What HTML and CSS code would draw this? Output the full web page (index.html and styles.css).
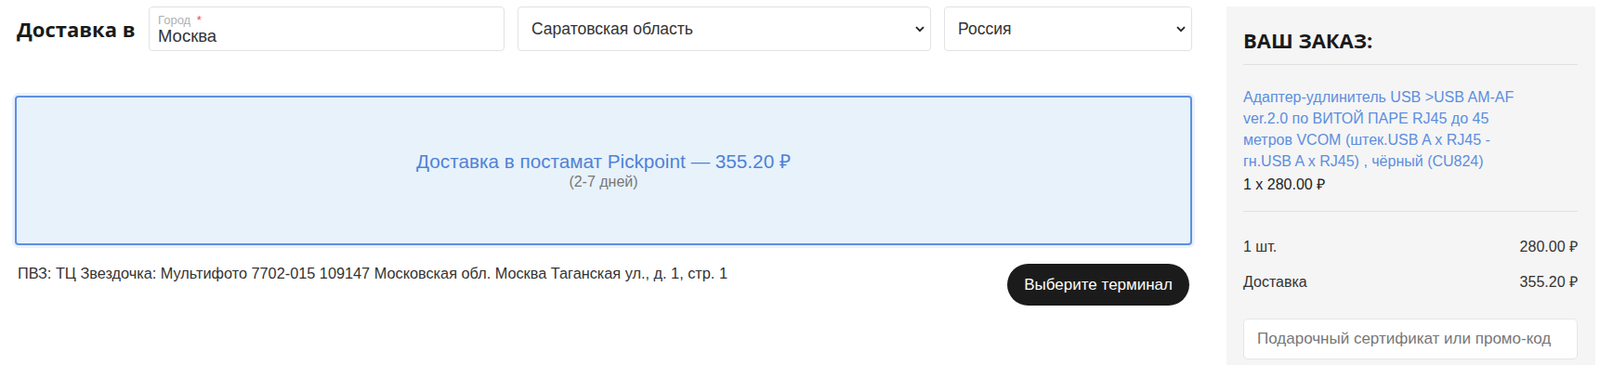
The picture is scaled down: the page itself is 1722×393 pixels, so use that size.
FILE: index.html
```html
<!DOCTYPE html>
<html lang="ru">
<head>
  <meta charset="UTF-8">
  <meta name="viewport" content="width=device-width, initial-scale=1">
  <title>Оформление заказа</title>
  <link rel="stylesheet" href="styles.css">
</head>
<body>
<div class="page">
  <div class="main">
    <div class="location">
      <h2>Доставка в</h2>
      <label class="field city">
        <span class="field-label">Город <i>*</i></span>
        <input type="text" value="Москва">
      </label>
      <div class="select-wrap region">
        <select>
          <option>Саратовская область</option>
        </select>
        <svg class="chevron" width="10" height="7" viewBox="0 0 10 7"><path d="M1 1.2 5 5.2 9 1.2" fill="none" stroke="#222" stroke-width="1.8"/></svg>
      </div>
      <div class="select-wrap country">
        <select>
          <option>Россия</option>
        </select>
        <svg class="chevron" width="10" height="7" viewBox="0 0 10 7"><path d="M1 1.2 5 5.2 9 1.2" fill="none" stroke="#222" stroke-width="1.8"/></svg>
      </div>
    </div>

    <div class="method active">
      <div class="method-title">Доставка в постамат Pickpoint — 355.20 ₽</div>
      <div class="method-days">(2-7 дней)</div>
    </div>

    <div class="pvz">
      <p>ПВЗ: ТЦ Звездочка: Мультифото 7702-015 109147 Московская обл. Москва Таганская ул., д. 1, стр. 1</p>
      <button class="btn-terminal">Выберите терминал</button>
    </div>
  </div>

  <aside class="order">
    <h3>ВАШ ЗАКАЗ:</h3>
    <div class="order-item">
      <a href="#">Адаптер-удлинитель USB &gt;USB AM-AF ver.2.0 по ВИТОЙ ПАРЕ RJ45 до 45 метров VCOM (штек.USB A x RJ45 - гн.USB A x RJ45) , чёрный (CU824)</a>
      <div class="qty">1 x 280.00 ₽</div>
    </div>
    <div class="totals">
      <div class="row"><span>1 шт.</span><span>280.00 ₽</span></div>
      <div class="row"><span>Доставка</span><span>355.20 ₽</span></div>
    </div>
    <input class="promo" type="text" placeholder="Подарочный сертификат или промо-код">
  </aside>
</div>
</body>
</html>
```
FILE: styles.css
```css
body {
  margin: 0;
  font-family: "Liberation Sans", Arial, sans-serif;
  color: #333;
  background: #fff;
  overflow: hidden;
}

.page {
  display: flex;
  gap: 37px;
  padding: 7px 5px 0 16px;
}

.main {
  flex: 1;
}

/* строка выбора города */
.location {
  display: flex;
  align-items: center;
  gap: 14px;
}

.location h2 {
  flex: 1;
  margin: 0;
  padding-left: 2px;
  white-space: nowrap;
  font-family: "Open Sans", sans-serif;
  font-weight: 700;
  font-size: 22px;
  color: #1a1a1a;
}

.field {
  display: flex;
  flex-direction: column;
  height: 48px;
  box-sizing: border-box;
  border: 1px solid #e2e2e2;
  border-radius: 4px;
  padding: 7px 9px 0;
}

.city {
  width: 383px;
}

.field-label {
  font-size: 13px;
  line-height: 14px;
  color: #b0b0b0;
}

.field-label i {
  font-style: normal;
  color: #e05252;
  margin-left: 3px;
}

.field input {
  border: none;
  outline: none;
  padding: 0;
  margin: 0;
  font-family: inherit;
  font-size: 18.5px;
  line-height: 20px;
  color: #333;
  background: none;
}

.select-wrap {
  position: relative;
}

.region {
  width: 445px;
}

.country {
  width: 267px;
}

.select-wrap select {
  appearance: none;
  width: 100%;
  height: 48px;
  border: 1px solid #e2e2e2;
  border-radius: 4px;
  background: #fff;
  padding: 0 14px;
  font-family: inherit;
  font-size: 17.5px;
  color: #333;
}

.chevron {
  position: absolute;
  right: 7px;
  top: 21px;
}

/* способ доставки */
.method {
  margin-top: 48px;
  height: 161px;
  box-sizing: border-box;
  border: 2px solid #5d8fe2;
  border-radius: 4px;
  background: #e8f2fb;
  box-shadow: 0 0 0 3px #eaf2fc;
  display: flex;
  flex-direction: column;
  align-items: center;
  justify-content: center;
}

.method-title {
  color: #4f82d6;
  font-size: 20.7px;
  line-height: 25px;
}

.method-days {
  color: #777;
  font-size: 16px;
  line-height: 20px;
}

.pvz {
  display: flex;
  justify-content: space-between;
  align-items: flex-start;
  margin-top: 20px;
  padding-left: 3px;
}

.pvz p {
  margin: 0;
  font-size: 16.3px;
  line-height: 20px;
  color: #333;
}

.btn-terminal {
  height: 45px;
  padding: 0 18px;
  margin-right: 3px;
  border: none;
  border-radius: 23px;
  background: #1b1b1b;
  color: #fff;
  font-family: inherit;
  font-size: 17px;
  cursor: pointer;
}

/* корзина */
.order {
  width: 397px;
  min-height: 386px;
  box-sizing: border-box;
  background: #f5f5f5;
  padding: 20px 19px 0 18px;
}

.order h3 {
  margin: 0;
  font-family: "Open Sans", sans-serif;
  font-weight: 700;
  font-size: 22px;
  line-height: 32px;
  color: #1a1a1a;
  padding-bottom: 10px;
  border-bottom: 1px solid #e0e0e0;
}

.order-item {
  padding: 23px 0 17px;
  border-bottom: 1px solid #e0e0e0;
  font-size: 16px;
  line-height: 23px;
}

.order-item a {
  display: block;
  max-width: 305px;
  color: #5b8ee0;
  text-decoration: none;
}

.qty {
  color: #222;
  margin-top: 2px;
}

.totals {
  padding-top: 28px;
}

.totals .row {
  display: flex;
  justify-content: space-between;
  font-size: 16px;
  line-height: 20px;
  margin-bottom: 18px;
}

.promo {
  display: block;
  width: 100%;
  height: 44px;
  box-sizing: border-box;
  margin-top: 29px;
  border: 1px solid #e6e6e6;
  border-radius: 5px;
  padding: 0 14px;
  font-family: inherit;
  font-size: 17px;
  background: #fff;
}

.promo::placeholder {
  color: #777;
}
```
